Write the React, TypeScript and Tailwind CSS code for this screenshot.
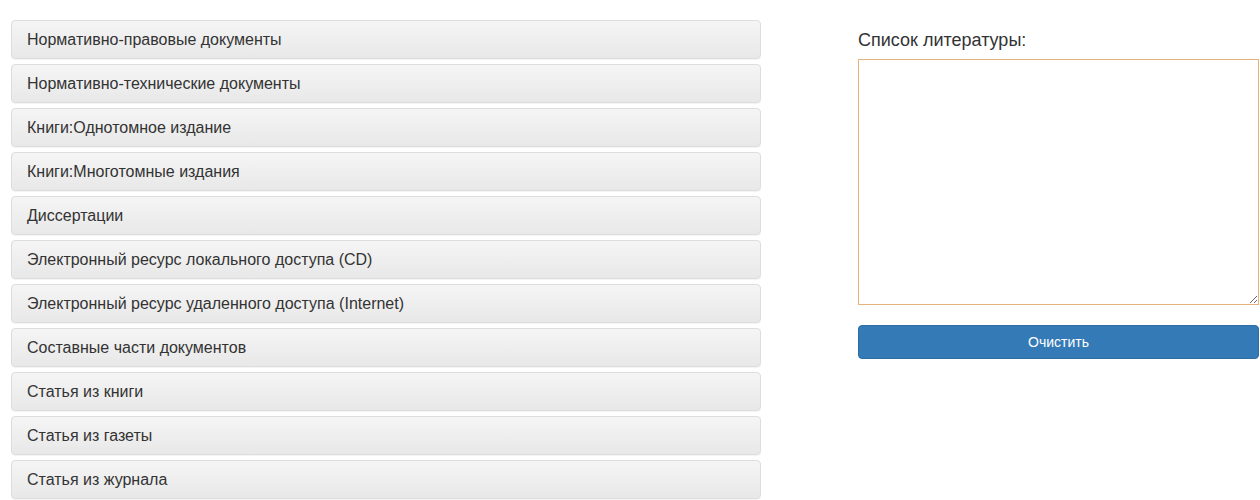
import React, { useState } from "react";

// ── Section list (left column) ────────────────────────────────────────────────
const SECTIONS = [
  "Нормативно-правовые документы",
  "Нормативно-технические документы",
  "Книги:Однотомное издание",
  "Книги:Многотомные издания",
  "Диссертации",
  "Электронный ресурс локального доступа (CD)",
  "Электронный ресурс удаленного доступа (Internet)",
  "Составные части документов",
  "Статья из книги",
  "Статья из газеты",
  "Статья из журнала",
];

const FONT = { fontFamily: '"Liberation Sans", Arial, sans-serif' };

const App: React.FC = () => {
  const [text, setText] = useState("");

  return (
    <div className="w-[1260px] h-[500px] bg-white overflow-hidden text-[#333]" style={FONT}>
      <div className="flex pt-[20px] pl-[11px]">
        {/* ================= PANELS ================= */}
        <div className="w-[750px] flex flex-col gap-[5px]">
          {SECTIONS.map((s) => (
            <div
              key={s}
              className="h-[39px] flex items-center px-[15px] border border-[#ddd] rounded-[4px] bg-gradient-to-b from-[#f5f5f5] to-[#e8e8e8] shadow-[0_1px_1px_rgba(0,0,0,0.05)] text-[16px] leading-[18px] cursor-pointer"
            >
              {s}
            </div>
          ))}
        </div>

        {/* ================= BIBLIOGRAPHY ================= */}
        <div className="ml-[97px] w-[401px] flex flex-col">
          <div className="text-[18px] leading-[20px] mt-[10px] mb-[9px]">Список литературы:</div>
          <textarea
            value={text}
            onChange={(e) => setText(e.target.value)}
            className="w-full h-[246px] border border-[#e5b47c] bg-white outline-none p-2 text-[14px]"
          />
          <button
            onClick={() => setText("")}
            className="mt-[20px] h-[34px] w-full rounded-[4px] bg-[#337ab7] border border-[#2e6da4] text-white text-[14px]"
          >
            Очистить
          </button>
        </div>
      </div>
    </div>
  );
};

export default App;
